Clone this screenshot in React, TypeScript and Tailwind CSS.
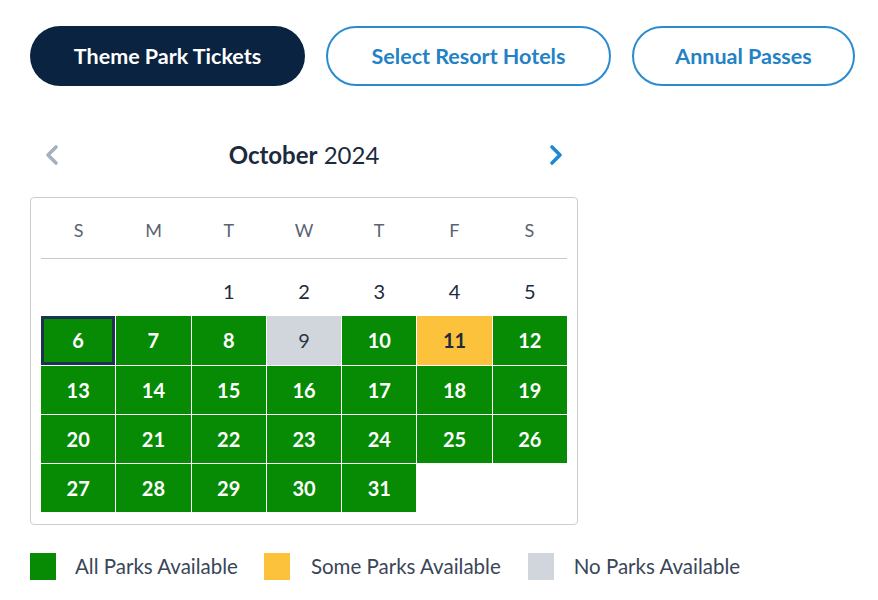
import React from 'react';

type Status = 'all' | 'some' | 'none';

const weekdays = ['S', 'M', 'T', 'W', 'T', 'F', 'S'];

// Oct 2024 starts on a Tuesday
const days: (number | null)[] = [null, null, ...Array.from({ length: 31 }, (_, i) => i + 1)];

function statusOf(day: number): Status | null {
  if (day < 6) return null;
  if (day === 9) return 'none';
  if (day === 11) return 'some';
  return 'all';
}

function Chevron({ dir, color }: { dir: 'left' | 'right'; color: string }) {
  return (
    <svg width="14" height="22" viewBox="0 0 14 22" fill="none">
      <polyline
        points={dir === 'left' ? '11,3 3,11 11,19' : '3,3 11,11 3,19'}
        stroke={color}
        strokeWidth="3.6"
        strokeLinecap="round"
        strokeLinejoin="round"
      />
    </svg>
  );
}

function DayCell({ day, selected }: { day: number | null; selected?: boolean }) {
  if (day === null) return <div className="h-[48.25px]" />;
  const s = statusOf(day);
  if (s === null) {
    return (
      <div className="h-[48.25px] flex items-center justify-center text-[20px] text-[#1d2b3d]">
        {day}
      </div>
    );
  }
  const bg =
    s === 'all' ? 'bg-[#078a04] text-white font-bold' : s === 'some' ? 'bg-[#fcc23c] text-[#1d2b3d] font-bold' : 'bg-[#d1d6dc] text-[#2b3647]';
  return (
    <div
      className={`h-[48.25px] flex items-center justify-center text-[20px] ${bg} ${
        selected ? 'shadow-[inset_0_0_0_3px_#1c3250]' : ''
      }`}
    >
      {day}
    </div>
  );
}

export default function App() {
  return (
    <div className="w-[878px] h-[600px] bg-white font-['Lato',sans-serif] pl-[30px] pt-[26px]">
      {/* tabs */}
      <div className="flex gap-[21px]">
        <button className="h-[60px] w-[275px] rounded-full bg-[#0a2340] text-white text-[21.5px] font-bold">
          Theme Park Tickets
        </button>
        <button className="h-[60px] w-[285px] rounded-full border-2 border-[#2a8bd0] text-[#2382c5] text-[21.5px] font-bold">
          Select Resort Hotels
        </button>
        <button className="h-[60px] w-[223px] rounded-full border-2 border-[#2a8bd0] text-[#2382c5] text-[21.5px] font-bold">
          Annual Passes
        </button>
      </div>

      {/* month header */}
      <div className="w-[548px] mt-[49px] h-[40px] flex items-center justify-between px-[15px]">
        <Chevron dir="left" color="#a6b1bd" />
        <div className="text-[24px] text-[#1b2a3d]">
          <span className="font-bold">October</span> 2024
        </div>
        <Chevron dir="right" color="#1f88d1" />
      </div>

      {/* calendar */}
      <div className="w-[548px] mt-[22px] border border-[#c9ced3] rounded-[4px] px-[10px] pb-[12px]">
        <div className="grid grid-cols-7 h-[61px] pt-[5px] items-center border-b border-[#c6cacf] text-[18px] text-[#5a6370]">
          {weekdays.map((d, i) => (
            <div key={i} className="text-center">
              {d}
            </div>
          ))}
        </div>
        <div className="grid grid-cols-7 gap-px bg-white w-[526px] mt-[8px]">
          {days.map((d, i) => (
            <DayCell key={i} day={d} selected={d === 6} />
          ))}
        </div>
      </div>

      {/* legend */}
      <div className="flex items-center mt-[26px] text-[20.5px] text-[#3a4658]">
        <span className="w-[26px] h-[27px] bg-[#078a04]" />
        <span className="ml-[19px]">All Parks Available</span>
        <span className="w-[26px] h-[27px] bg-[#fcc23c] ml-[26px]" />
        <span className="ml-[21px]">Some Parks Available</span>
        <span className="w-[26px] h-[27px] bg-[#d1d6dc] ml-[27px]" />
        <span className="ml-[20px]">No Parks Available</span>
      </div>
    </div>
  );
}
